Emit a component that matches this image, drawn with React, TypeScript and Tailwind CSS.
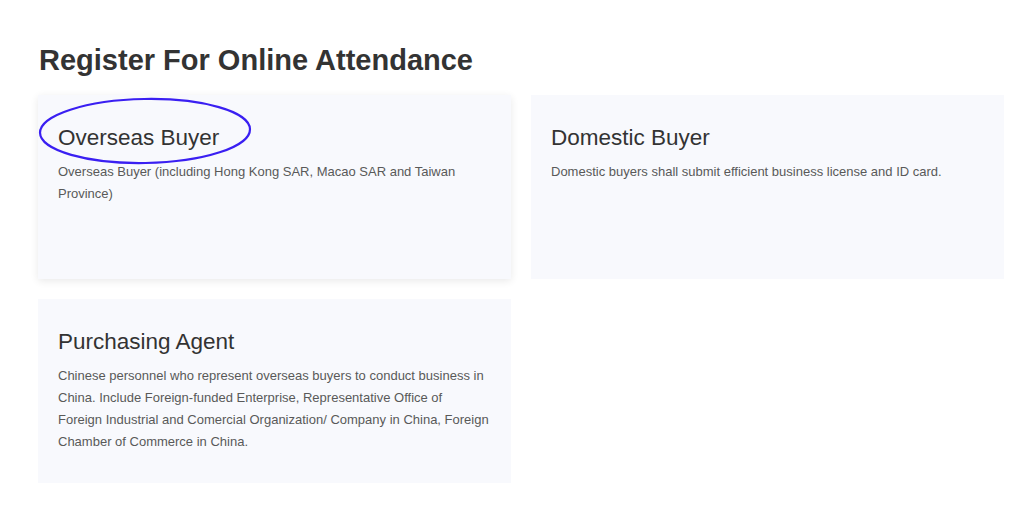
import React from "react";

interface Option {
  title: string;
  description: string;
  highlighted?: boolean;
}

const options: Option[] = [
  {
    title: "Overseas Buyer",
    description:
      "Overseas Buyer (including Hong Kong SAR, Macao SAR and Taiwan Province)",
    highlighted: true,
  },
  {
    title: "Domestic Buyer",
    description:
      "Domestic buyers shall submit efficient business license and ID card.",
  },
  {
    title: "Purchasing Agent",
    description:
      "Chinese personnel who represent overseas buyers to conduct business in China. Include Foreign-funded Enterprise, Representative Office of\nForeign Industrial and Comercial Organization/ Company in China, Foreign Chamber of Commerce in China.",
  },
];

// hand-drawn style circle around the first card's title
function Annotation() {
  return (
    <svg
      className="absolute left-0 top-0 pointer-events-none"
      width="220"
      height="75"
      viewBox="0 0 220 75"
    >
      <ellipse
        cx="107"
        cy="36"
        rx="105"
        ry="32"
        fill="none"
        stroke="#3a1ff2"
        strokeWidth="2.2"
        transform="rotate(-1 107 36)"
      />
    </svg>
  );
}

export default function App() {
  return (
    <div
      className="min-h-[521px] w-full bg-white pl-[38px] pt-[43px]"
      style={{ fontFamily: '"Liberation Sans", Arial, sans-serif' }}
    >
      <h1 className="ml-[1px] text-[29px] font-bold leading-[1.2] text-[#333333]">
        Register For Online Attendance
      </h1>
      <div className="mt-[17px] grid w-[966px] grid-cols-2 gap-x-[20px] gap-y-[20px]">
        {options.map((opt) => (
          <div
            key={opt.title}
            className={
              opt.highlighted
                ? "relative min-h-[184px] bg-[#f8f9fd] pl-[20px] pr-[16px] pt-[29px] pb-[30px] shadow-[0_2px_8px_rgba(0,0,0,0.09)]"
                : "relative min-h-[184px] bg-[#f8f9fd] pl-[20px] pr-[16px] pt-[29px] pb-[30px]"
            }
          >
            {opt.highlighted && <Annotation />}
            <h3 className="text-[22.5px] leading-[1.2] text-[#333333]">
              {opt.title}
            </h3>
            <p className="mt-[10px] whitespace-pre-line text-[13px] leading-[22px] text-[#595959]">
              {opt.description}
            </p>
          </div>
        ))}
      </div>
    </div>
  );
}
